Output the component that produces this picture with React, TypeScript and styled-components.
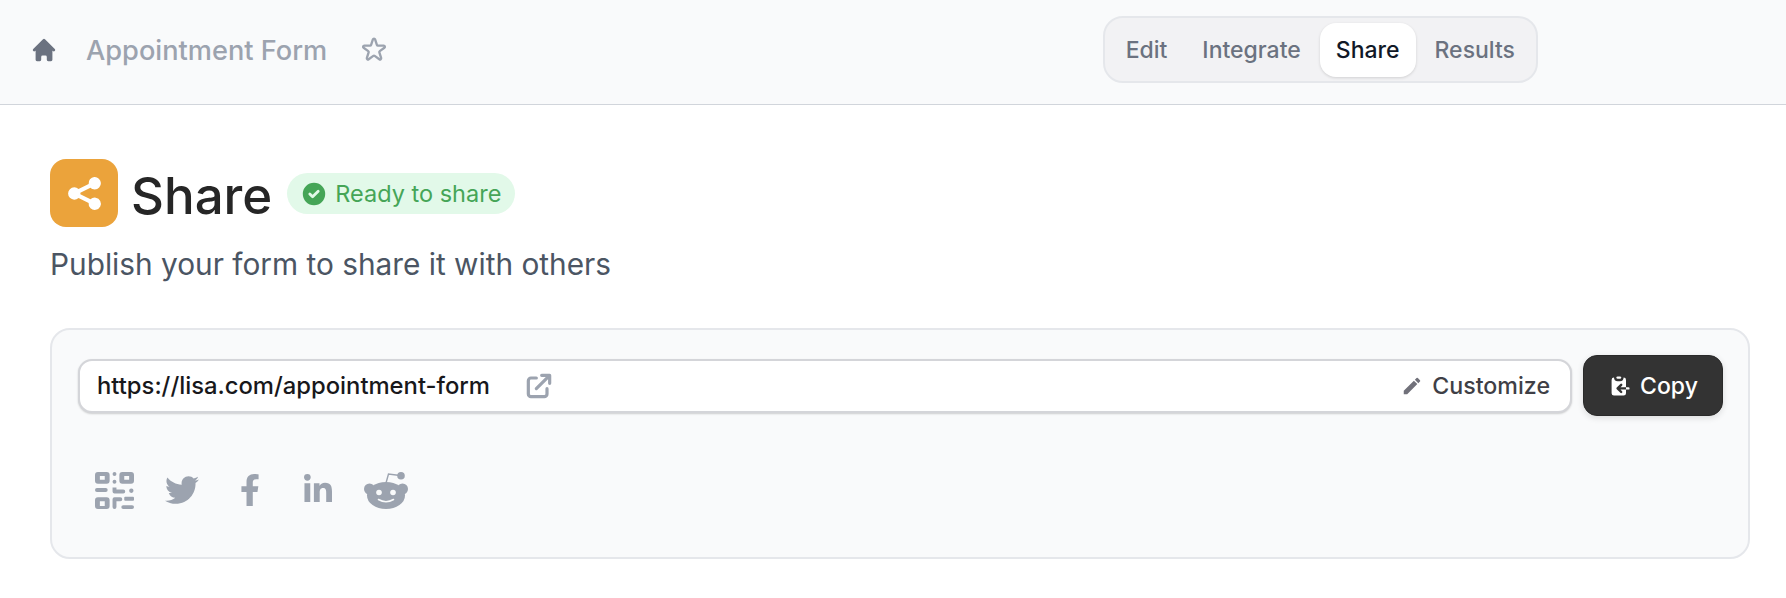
import { createGlobalStyle } from "styled-components";
import styled from "styled-components";
import { FaFacebookF, FaLinkedinIn, FaTwitter } from "react-icons/fa";
import { HiCheckCircle, HiClipboardCopy, HiHome, HiOutlineExternalLink, HiOutlineStar, HiShare } from "react-icons/hi";
import { MdEdit } from "react-icons/md";

const GlobalStyle = createGlobalStyle`
    html, body {
        margin: 0;
        background: #ffffff;
        font-family: "Inter", "Liberation Sans", sans-serif;
    }
`;

const Page = styled.div`
    width: 1786px;
    height: 598px;
    overflow: hidden;
`;

const TopBar = styled.header`
    height: 99px;
    display: flex;
    align-items: center;
    padding: 0 248px 5px 30px;
    background: #f9fafb;
    border-bottom: 1px solid #d1d5db;
`;

const HomeIcon = styled(HiHome)`
    width: 28px;
    height: 28px;
    color: #6b7280;
`;

const FormName = styled.span`
    margin-left: 28px;
    padding-top: 2px;
    font-size: 27.2px;
    font-weight: 500;
    color: #9ca3af;
`;

const StarIcon = styled(HiOutlineStar)`
    width: 28px;
    height: 28px;
    margin-left: 33px;
    color: #9ca3af;
`;

const Tabs = styled.nav`
    margin-left: auto;
    height: 67px;
    box-sizing: border-box;
    display: flex;
    align-items: center;
    padding: 0 5px;
    gap: 3px;
    background: #f2f2f4;
    border: 2px solid #e5e7eb;
    border-radius: 20px;
`;

const Tab = styled.span<{ $active?: boolean }>`
    height: 54px;
    display: flex;
    align-items: center;
    padding: 0 16px;
    font-size: 23px;
    font-weight: 500;
    border-radius: 16px;
    color: ${(props) => (props.$active ? "#111827" : "#6b7280")};
    background: ${(props) => (props.$active ? "#ffffff" : "transparent")};
    box-shadow: ${(props) => (props.$active ? "0 1px 3px rgba(0,0,0,0.14)" : "none")};
`;

const Content = styled.main`
    padding: 54px 36px 0 50px;
`;

const TitleRow = styled.div`
    display: flex;
    align-items: center;
`;

const TitleIcon = styled.div`
    width: 68px;
    height: 68px;
    display: flex;
    align-items: center;
    justify-content: center;
    border-radius: 16px;
    background: #eba33b;
    color: #ffffff;
    font-size: 41px;
`;

const Title = styled.h1`
    height: 68px;
    margin: 0 15px 0 13px;
    font-size: 51px;
    font-weight: 500;
    line-height: 73px;
    color: #262626;
`;

const Badge = styled.span`
    height: 41px;
    margin-top: 1px;
    display: flex;
    align-items: center;
    gap: 7px;
    padding: 0 14px 0 13px;
    border-radius: 21px;
    background: #e2f9e9;
    color: #45a557;
    font-size: 23.5px;
`;

const Subtitle = styled.p`
    margin: 19px 0 0;
    font-size: 29.8px;
    line-height: 36px;
    color: #4b5563;
`;

const Card = styled.section`
    height: 231px;
    margin-top: 46px;
    box-sizing: border-box;
    padding: 25px 25px 0 26px;
    background: #f9fafb;
    border: 2px solid #e5e7eb;
    border-radius: 20px;
`;

const LinkRow = styled.div`
    display: flex;
    align-items: center;
    gap: 11px;
`;

const UrlField = styled.div`
    flex: 1;
    height: 54px;
    box-sizing: border-box;
    display: flex;
    align-items: center;
    padding: 0 20px 0 17px;
    background: #ffffff;
    border: 2px solid #d4d5d9;
    border-radius: 14px;
    box-shadow: 0 1px 2px rgba(0, 0, 0, 0.18);
`;

const Url = styled.span`
    font-size: 23.8px;
    font-weight: 500;
    color: #18181b;
`;

const OpenIcon = styled(HiOutlineExternalLink)`
    width: 32px;
    height: 32px;
    margin-left: 33px;
    color: #9ca3af;
    stroke-width: 2.4;
`;

const Customize = styled.span`
    margin-left: auto;
    display: flex;
    align-items: center;
    gap: 9px;
    font-size: 23.2px;
    font-weight: 500;
    color: #3f3f46;
`;

const PencilIcon = styled(MdEdit)`
    width: 22px;
    height: 22px;
    color: #71717a;
`;

const CopyButton = styled.button`
    width: 140px;
    height: 61px;
    display: flex;
    align-items: center;
    justify-content: center;
    gap: 8px;
    padding: 0;
    font: 500 23px "Inter", "Liberation Sans", sans-serif;
    color: #ffffff;
    background: #333333;
    border: 1px solid #2a2a2a;
    border-radius: 14px;
    box-shadow: 0 2px 6px rgba(0, 0, 0, 0.12);
`;

const Socials = styled.div`
    margin-top: 54px;
    padding-left: 2px;
    display: flex;
    align-items: center;
    color: #9ca3af;
`;

const Social = styled.span`
    width: 68px;
    height: 40px;
    display: flex;
    align-items: center;
    justify-content: center;
`;

function QrIcon() {
    return (
        <svg width="39" height="39" viewBox="0 0 40 40" fill="currentColor">
            <path fillRule="evenodd" d="M3 1h9a3 3 0 0 1 3 3v6a3 3 0 0 1-3 3H3a3 3 0 0 1-3-3V4a3 3 0 0 1 3-3zm2 4v4h5V5zM28 1h9a3 3 0 0 1 3 3v6a3 3 0 0 1-3 3h-9a3 3 0 0 1-3-3V4a3 3 0 0 1 3-3zm2 4v4h5V5zM3 27h9a3 3 0 0 1 3 3v6a3 3 0 0 1-3 3H3a3 3 0 0 1-3-3v-6a3 3 0 0 1 3-3zm2 4v5h5v-5z" />
            <rect x="0" y="17.5" width="13" height="4" rx="2" />
            <rect x="18" y="1" width="4" height="4" rx="2" />
            <rect x="18" y="9" width="4" height="4" rx="2" />
            <path d="M18 17h4v2h7a2 2 0 0 1 0 4H20a2 2 0 0 1-2-2z" />
            <rect x="35" y="18" width="4.5" height="4.5" rx="2.2" />
            <path d="M20 27h6a2 2 0 0 1 0 4h-4v6a2 2 0 0 1-4 0v-8a2 2 0 0 1 2-2z" />
            <rect x="30" y="26.5" width="10" height="4" rx="1" />
            <rect x="27" y="35" width="13" height="4" rx="2" />
        </svg>
    );
}

function RedditIcon() {
    return (
        <svg width="44" height="37" viewBox="0 0 44 37" fill="currentColor">
            <path d="M22 11 24.5 2 36 3.5" fill="none" stroke="currentColor" strokeWidth="1.4" />
            <circle cx="37" cy="3.8" r="3.8" />
            <circle cx="5.5" cy="17" r="5.5" />
            <circle cx="38.5" cy="17" r="5.5" />
            <ellipse cx="22" cy="23.5" rx="19" ry="13.5" />
            <circle cx="15" cy="20.5" r="2.8" fill="#f9fafb" />
            <circle cx="29" cy="20.5" r="2.8" fill="#f9fafb" />
            <path d="M14.5 27.5q7.5 4.5 15 0" fill="none" stroke="#f9fafb" strokeWidth="1.6" strokeLinecap="round" />
        </svg>
    );
}

export default function App() {
    return (
        <Page>
            <GlobalStyle />
            <TopBar>
                <HomeIcon />
                <FormName>Appointment Form</FormName>
                <StarIcon />
                <Tabs>
                    <Tab>Edit</Tab>
                    <Tab>Integrate</Tab>
                    <Tab $active>Share</Tab>
                    <Tab>Results</Tab>
                </Tabs>
            </TopBar>
            <Content>
                <TitleRow>
                    <TitleIcon>
                        <HiShare />
                    </TitleIcon>
                    <Title>Share</Title>
                    <Badge>
                        <HiCheckCircle size={28} />
                        Ready to share
                    </Badge>
                </TitleRow>
                <Subtitle>Publish your form to share it with others</Subtitle>
                <Card>
                    <LinkRow>
                        <UrlField>
                            <Url>https://lisa.com/appointment-form</Url>
                            <OpenIcon />
                            <Customize>
                                <PencilIcon />
                                Customize
                            </Customize>
                        </UrlField>
                        <CopyButton>
                            <HiClipboardCopy size={24} />
                            Copy
                        </CopyButton>
                    </LinkRow>
                    <Socials>
                        <Social>
                            <QrIcon />
                        </Social>
                        <Social>
                            <FaTwitter size={34} />
                        </Social>
                        <Social>
                            <FaFacebookF size={32} />
                        </Social>
                        <Social>
                            <FaLinkedinIn size={32} />
                        </Social>
                        <Social>
                            <RedditIcon />
                        </Social>
                    </Socials>
                </Card>
            </Content>
        </Page>
    );
}
